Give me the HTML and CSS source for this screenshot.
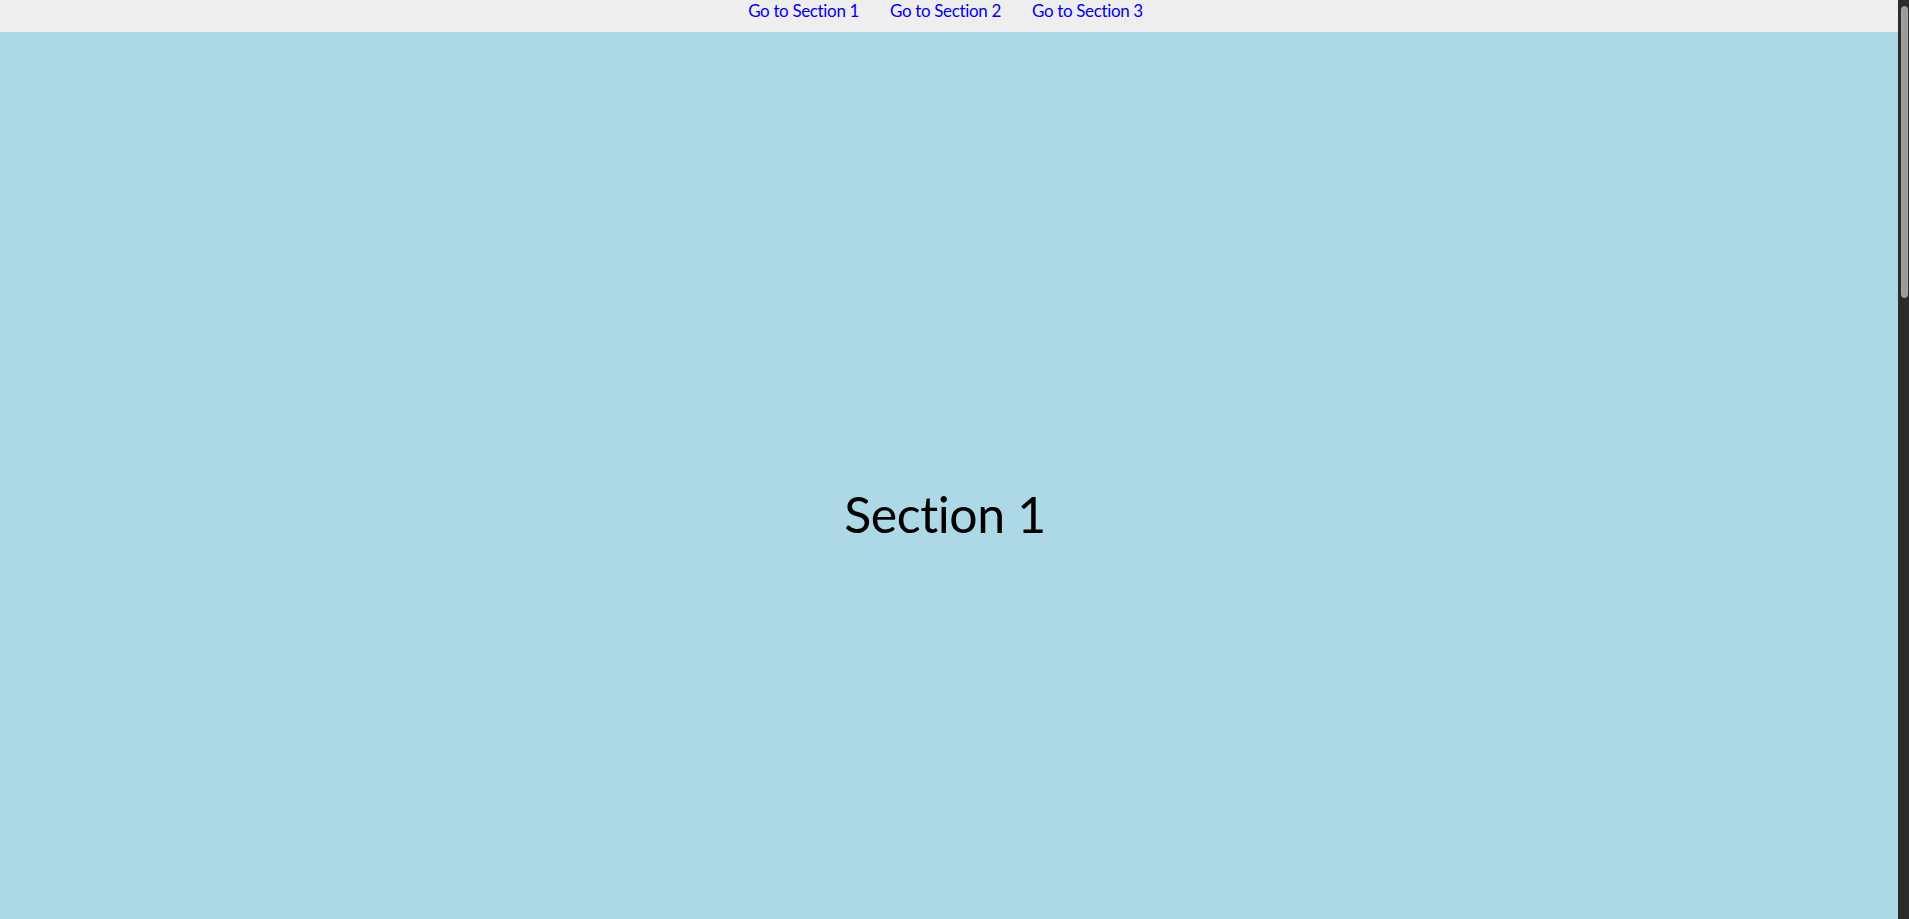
FILE: index.html
```html
<!DOCTYPE html>
<html lang="en">
<head>
<meta charset="utf-8">
<title>Sections</title>
<link rel="stylesheet" href="styles.css">
</head>
<body>
<div class="page">
  <nav class="topnav">
    <a class="navlink" href="#section1">Go to Section 1</a>
    <a class="navlink" href="#section2">Go to Section 2</a>
    <a class="navlink" href="#section3">Go to Section 3</a>
  </nav>
  <main class="section section-one" id="section1">
    <h1 class="section-title">Section 1</h1>
  </main>
</div>
<div class="scrollbar" aria-hidden="true"><div class="scrollbar-thumb"></div></div>
</body>
</html>
```

FILE: styles.css
```css
html, body {
  margin: 0;
  padding: 0;
  height: 100%;
  overflow: hidden;
}
body {
  display: flex;
  font-family: Lato, "Liberation Sans", sans-serif;
  font-variant-ligatures: none;
  color: #000;
  background: #add8e6;
}
.page {
  flex: 1;
  display: flex;
  flex-direction: column;
  min-width: 0;
}
.topnav {
  flex: 0 0 32px;
  background: #eeeeee;
  display: flex;
  justify-content: center;
  align-items: flex-start;
  gap: 31px;
  padding-top: 1px;
  padding-right: 7px;
  box-sizing: border-box;
}
.navlink {
  color: #0000ee;
  text-decoration: none;
  font-size: 17px;
  line-height: 20px;
  letter-spacing: -0.35px;
}
.section {
  flex: 1;
  box-sizing: border-box;
  padding-top: 77px;
  padding-right: 8px;
  display: flex;
  align-items: center;
  justify-content: center;
}
.section-one { background: #add8e6; }
.section-title {
  margin: 0;
  font-size: 50px;
  font-weight: 400;
  line-height: 60px;
  letter-spacing: -0.4px;
}
.scrollbar {
  flex: 0 0 11px;
  background: #2b2b2b;
  padding: 6px 1px 0 3px;
  box-sizing: border-box;
}
.scrollbar-thumb {
  height: 292px;
  background: #9b9b9b;
  border: 1px solid #a8a8a0;
  box-sizing: border-box;
  border-radius: 4px;
}
```
